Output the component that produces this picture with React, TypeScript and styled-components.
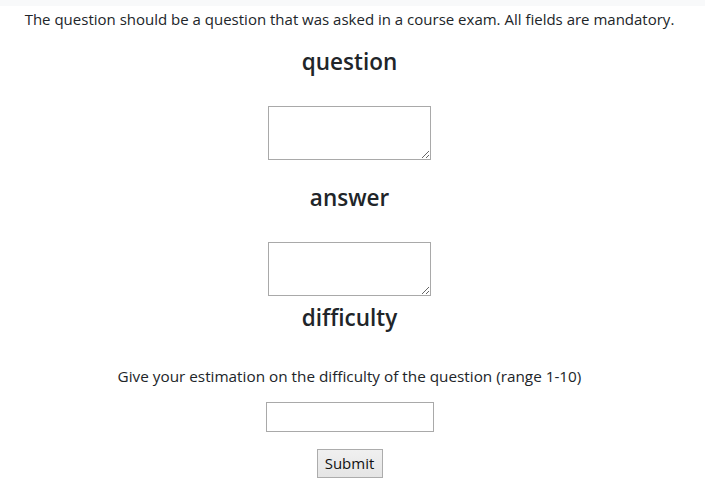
import React from "react";
import styled, { createGlobalStyle } from "styled-components";

const Global = createGlobalStyle`
  html, body { margin: 0; padding: 0; background: #ffffff; }
  body {
    font-family: "Open Sans", "Noto Sans", "Liberation Sans", sans-serif;
    color: #212529;
  }
`;

const TopBand = styled.div`
  height: 6px;
  background: #f8f9fa;
`;

const Form = styled.form`
  display: flex;
  flex-direction: column;
  align-items: center;
  text-align: center;
  padding-right: 6px;
`;

const Text = styled.p<{ $mt: number; $size?: number }>`
  margin: ${(p) => p.$mt}px 0 0;
  font-size: ${(p) => p.$size ?? 15}px;
  line-height: 24px;
  color: #212529;
`;

const Heading = styled.h4<{ $mt: number }>`
  margin: ${(p) => p.$mt}px 0 0;
  font-size: 22.5px;
  line-height: 28.8px;
  font-weight: 600;
  color: #212529;
`;

const Area = styled.textarea<{ $mt: number }>`
  display: block;
  box-sizing: border-box;
  margin: ${(p) => p.$mt}px 0 0;
  width: 163px;
  height: 54px;
  border: 1px solid #a9a9a9;
  background: #fff;
  padding: 2px;
`;

const Input = styled.input<{ $mt: number }>`
  display: block;
  box-sizing: border-box;
  margin: ${(p) => p.$mt}px 0 0;
  width: 168px;
  height: 30px;
  border: 1px solid #a9a9a9;
  background: #fff;
`;

const Button = styled.button<{ $mt: number }>`
  box-sizing: border-box;
  margin: ${(p) => p.$mt}px 0 0;
  width: 66px;
  height: 29px;
  padding: 0;
  border: 1px solid #acacac;
  border-radius: 0;
  background: linear-gradient(#f0f0f0, #e5e5e5);
  font-family: "Open Sans", "Noto Sans", sans-serif;
  font-size: 15px;
  color: #111;
`;

export default function App() {
  return (
    <>
      <Global />
      <TopBand />
      <Form onSubmit={(e) => e.preventDefault()}>
        <Text $mt={1}>
          The question should be a question that was asked in a course exam. All fields are mandatory.
        </Text>
        <Heading $mt={16.6}>question</Heading>
        <Area $mt={29.6} />
        <Heading $mt={23.6}>answer</Heading>
        <Area $mt={29.6} />
        <Heading $mt={7.6}>difficulty</Heading>
        <Text $mt={31.6} $size={15.3}>
          Give your estimation on the difficulty of the question (range 1-10)
        </Text>
        <Input $mt={14} />
        <Button $mt={17} type="submit">Submit</Button>
      </Form>
    </>
  );
}
